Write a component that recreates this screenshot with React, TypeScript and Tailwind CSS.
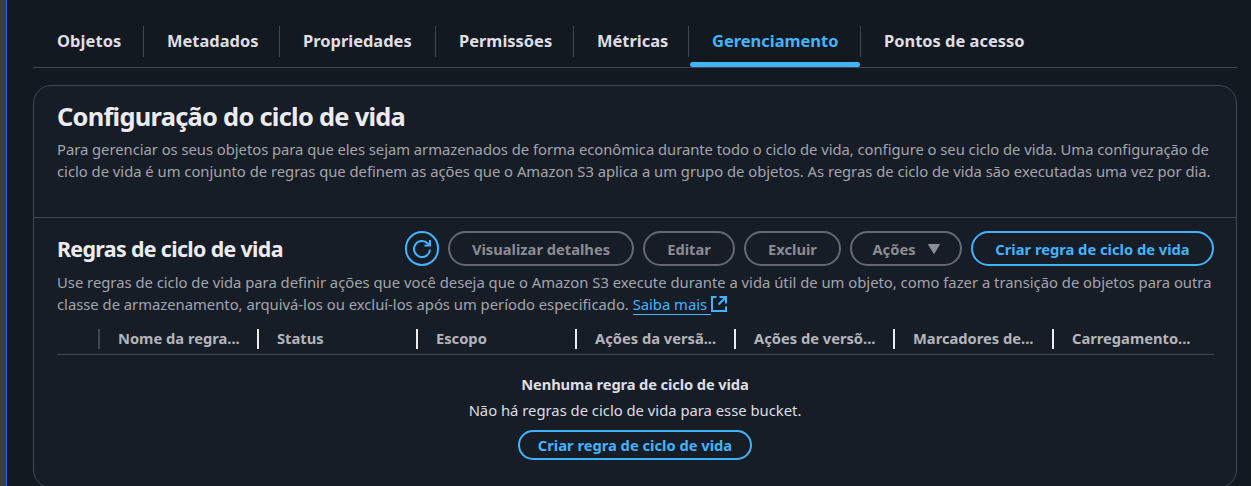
import type { ReactNode } from "react";

type Tab = { label: string; width: string; active?: boolean };

const tabs: Tab[] = [
  { label: "Objetos", width: "w-[111px]" },
  { label: "Metadados", width: "w-[136px]" },
  { label: "Propriedades", width: "w-[156px]" },
  { label: "Permissões", width: "w-[138px]" },
  { label: "Métricas", width: "w-[115px]" },
  { label: "Gerenciamento", width: "w-[172px]", active: true },
  { label: "Pontos de acesso", width: "w-[190px]" },
];

const columns = [
  "Nome da regra...",
  "Status",
  "Escopo",
  "Ações da versã...",
  "Ações de versõ...",
  "Marcadores de...",
  "Carregamento...",
];

function PillButton({ children, width, primary }: { children: ReactNode; width: string; primary?: boolean }) {
  return (
    <button
      className={`flex h-[35px] shrink-0 items-center justify-center rounded-full border-2 pt-px text-[14.7px] font-bold whitespace-nowrap ${width} ${
        primary ? "border-[#42b4ff] text-[#42b4ff]" : "border-[#656871] text-[#8c8c94]"
      }`}
    >
      {children}
    </button>
  );
}

function RefreshIcon() {
  return (
    <svg width="20" height="20" viewBox="0 0 20 20" fill="none" stroke="currentColor" strokeWidth="2">
      <path d="M18 10.5a8 8 0 1 1-2.4-6.2L17.6 6" />
      <path d="M18 1v5.5h-5.5" />
    </svg>
  );
}

function ExternalIcon() {
  return (
    <svg className="inline-block align-[-2px]" width="16" height="16" viewBox="0 0 16 16" fill="none" stroke="currentColor" strokeWidth="2">
      <path d="M5.5 1H1v14h14v-4.5M8.5 1H15v6.5M15 1 7.5 8.5" />
    </svg>
  );
}

export default function App() {
  return (
    <div className="flex h-[486px] w-[1251px] overflow-hidden bg-[#131920] font-['Noto_Sans',sans-serif] text-[14.8px] leading-[22px] text-[#a4a4ad]">
      <div className="w-[7px] shrink-0 border-r border-[#295eff] bg-[#3c3c3c]" />
      <main className="ml-[26px] flex w-[1204px] shrink-0 flex-col">
        <nav className="flex h-[68px] shrink-0 border-b border-[#424650] pt-[26px]">
          {tabs.map((t) => (
            <div key={t.label} className={`flex shrink-0 flex-col ${t.width}`}>
              <div
                className={`flex h-[31px] items-center pb-[2px] text-[16.45px] font-bold whitespace-nowrap ${
                  t.label === "Objetos" ? "pl-[24px] tracking-[0.08px]" : "pl-[23px]"
                } ${t.label === "Pontos de acesso" ? "" : "border-r border-[#424650]"} ${
                  t.active ? "text-[#42b4ff]" : "text-[#dedee3]"
                }`}
              >
                {t.label}
              </div>
              {t.active && <div className="mt-[5px] ml-px h-[5px] w-[170px] shrink-0 rounded-full bg-[#42b4ff]" />}
            </div>
          ))}
        </nav>

        <section className="mt-[17px] flex h-[403px] shrink-0 flex-col rounded-[18px] border border-[#424650] bg-[#171d26]">
          <header className="h-[132px] shrink-0 border-b border-[#424650] px-[23px] pt-[14px]">
            <h1 className="text-[25.4px] leading-[33px] font-bold tracking-[-0.72px] whitespace-nowrap text-[#ebebf0]">
              Configuração do ciclo de vida
            </h1>
            <p className="mt-[5px] whitespace-nowrap">
              <span className="tracking-[-0.032px]">
                Para gerenciar os seus objetos para que eles sejam armazenados de forma econômica durante todo o ciclo de vida, configure o seu ciclo de vida. Uma configuração de
              </span>
              <br />
              <span className="tracking-[-0.012px]">
                ciclo de vida é um conjunto de regras que definem as ações que o Amazon S3 aplica a um grupo de objetos. As regras de ciclo de vida são executadas uma vez por dia.
              </span>
            </p>
          </header>

          <div className="flex flex-col pt-[13px] pr-[22px] pl-[23px]">
            <div className="flex h-[35px] items-center justify-between">
              <h2 className="pt-px text-[21.4px] leading-[26px] font-bold tracking-[-0.66px] whitespace-nowrap text-[#ebebf0]">
                Regras de ciclo de vida
              </h2>
              <div className="flex gap-[9px]">
                <button aria-label="Atualizar" className="flex h-[35px] w-[34px] items-center justify-center rounded-full border-2 border-[#42b4ff] text-[#42b4ff]">
                  <RefreshIcon />
                </button>
                <PillButton width="w-[186px]">Visualizar detalhes</PillButton>
                <PillButton width="w-[92px]">Editar</PillButton>
                <PillButton width="w-[97px]">Excluir</PillButton>
                <PillButton width="w-[112px]">
                  Ações
                  <svg className="-mt-px ml-3" width="12" height="10" viewBox="0 0 12 10" fill="currentColor">
                    <path d="M.5.5h11L6 9.5z" stroke="currentColor" strokeLinejoin="round" />
                  </svg>
                </PillButton>
                <PillButton width="w-[243px]" primary>Criar regra de ciclo de vida</PillButton>
              </div>
            </div>

            <p className="mt-[5px] whitespace-nowrap">
              Use regras de ciclo de vida para definir ações que você deseja que o Amazon S3 execute durante a vida útil de um objeto, como fazer a transição de objetos para outra
              <br />
              <span className="tracking-[-0.008px]">
                classe de armazenamento, arquivá-los ou excluí-los após um período especificado.{" "}
              </span>
              <a className="text-[#42b4ff]">
                <span className="border-b border-[#42b4ff] whitespace-pre">Saiba mais </span>
                <ExternalIcon />
              </a>
            </p>

            <div className="mt-[14px] flex h-[26px] border-b border-[#424650] pl-[41px] text-[14.7px] font-bold text-[#b4b4bb]">
              {columns.map((c, i) => (
                <div
                  key={c}
                  className={`flex h-[20px] w-[159px] shrink-0 items-center border-l-2 pb-[2px] pl-[18px] whitespace-nowrap ${
                    i === 0 ? "border-[#424650]" : "border-[#ebebf0]"
                  } ${i === 6 ? "-mr-5" : ""}`}
                >
                  {c}
                </div>
              ))}
            </div>

            <div className="flex flex-col items-center pt-[18px] pr-px text-[#dedee3]">
              <b className="text-[14.7px] tracking-[-0.12px]">Nenhuma regra de ciclo de vida</b>
              <span className="mt-[4px]">Não há regras de ciclo de vida para esse bucket.</span>
              <button className="mt-[9px] flex h-[30px] w-[234px] items-center justify-center rounded-full border-2 border-[#42b4ff] text-[14.7px] font-bold whitespace-nowrap text-[#42b4ff]">
                Criar regra de ciclo de vida
              </button>
            </div>
          </div>
        </section>
      </main>
    </div>
  );
}
